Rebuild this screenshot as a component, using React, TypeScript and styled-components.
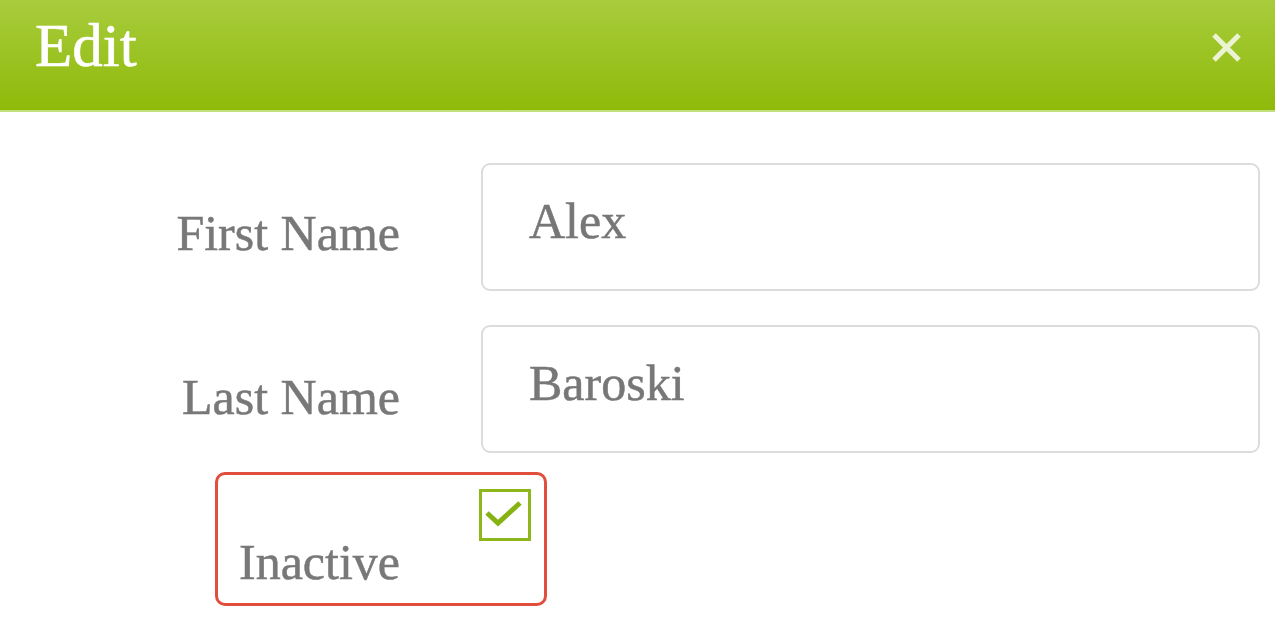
import React from "react";
import styled, { createGlobalStyle } from "styled-components";

const Global = createGlobalStyle`
  html, body { margin: 0; padding: 0; background: #ffffff; }
  body { font-family: "Liberation Serif", "Times New Roman", serif; }
  * { box-sizing: border-box; }
`;

const Dialog = styled.div`
  width: 1275px;
  height: 632px;
  background: #ffffff;
  display: flex;
  flex-direction: column;
  overflow: hidden;
`;

const Header = styled.header`
  height: 112px;
  flex: none;
  display: flex;
  justify-content: space-between;
  align-items: flex-start;
  padding: 0 35px 0 35px;
  background: linear-gradient(to bottom, #a8cc3c 0%, #8fba0a 100%);
  border-bottom: 2px solid #c4e07c;
`;

const Title = styled.h1`
  margin: 15px 0 0 0;
  font-family: "Liberation Serif", "Times New Roman", serif;
  font-weight: normal;
  font-size: 61px;
  line-height: 61px;
  color: #ffffff;
  -webkit-text-stroke: 0.6px #ffffff;
`;

const CloseButton = styled.button`
  margin: 32px -2px 0 0;
  padding: 0;
  width: 31px;
  height: 31px;
  border: none;
  background: transparent;
  display: flex;
  cursor: pointer;
`;

const Form = styled.form`
  display: flex;
  flex-direction: column;
  gap: 34px;
  padding: 51px 15px 0 0;
`;

const Row = styled.div<{ $top?: number }>`
  position: relative;
  display: flex;
  align-items: flex-start;
  gap: 81px;
  margin-top: ${(p) => p.$top ?? 0}px;
`;

const Label = styled.label<{ $offset: number }>`
  width: 400px;
  flex: none;
  text-align: right;
  font-size: 50px;
  line-height: 60px;
  color: #787878;
  -webkit-text-stroke: 0.5px #787878;
  margin-top: ${(p) => p.$offset}px;
`;

const TextInput = styled.input`
  flex: 1;
  height: 128px;
  padding: 0 20px 12px 46px;
  border: 2px solid #dcdcdc;
  border-radius: 9px;
  font-family: "Liberation Serif", "Times New Roman", serif;
  font-size: 50px;
  color: #777777;
  -webkit-text-stroke: 0.5px #777777;
  background: #ffffff;
  outline: none;
`;

const CheckBox = styled.span`
  width: 52px;
  height: 52px;
  flex: none;
  margin-left: -2px;
  border: 3px solid #8db71a;
  background: #ffffff;
  display: flex;
  align-items: center;
  justify-content: center;
`;

const Highlight = styled.div`
  position: absolute;
  left: 215px;
  top: -17px;
  width: 332px;
  height: 134px;
  border: 3px solid #e14e3c;
  border-radius: 10px;
  pointer-events: none;
`;

export default function App() {
  return (
    <>
      <Global />
      <Dialog>
        <Header>
          <Title>Edit</Title>
          <CloseButton aria-label="Close">
            <svg width="31" height="31" viewBox="0 0 31 31">
              <path
                d="M3 3 L28 28 M28 3 L3 28"
                stroke="#ecf3d2"
                strokeWidth="5"
                strokeLinecap="butt"
              />
            </svg>
          </CloseButton>
        </Header>
        <Form>
          <Row>
            <Label $offset={40}>First Name</Label>
            <TextInput defaultValue="Alex" />
          </Row>
          <Row>
            <Label $offset={42}>Last Name</Label>
            <TextInput defaultValue="Baroski" />
          </Row>
          <Row $top={2}>
            <Highlight />
            <Label $offset={43}>Inactive</Label>
            <CheckBox>
              <svg width="46" height="46" viewBox="0 0 46 46">
                <path
                  d="M5 21 L16 31 L38 11"
                  fill="none"
                  stroke="#86b312"
                  strokeWidth="5"
                />
              </svg>
            </CheckBox>
          </Row>
        </Form>
      </Dialog>
    </>
  );
}
